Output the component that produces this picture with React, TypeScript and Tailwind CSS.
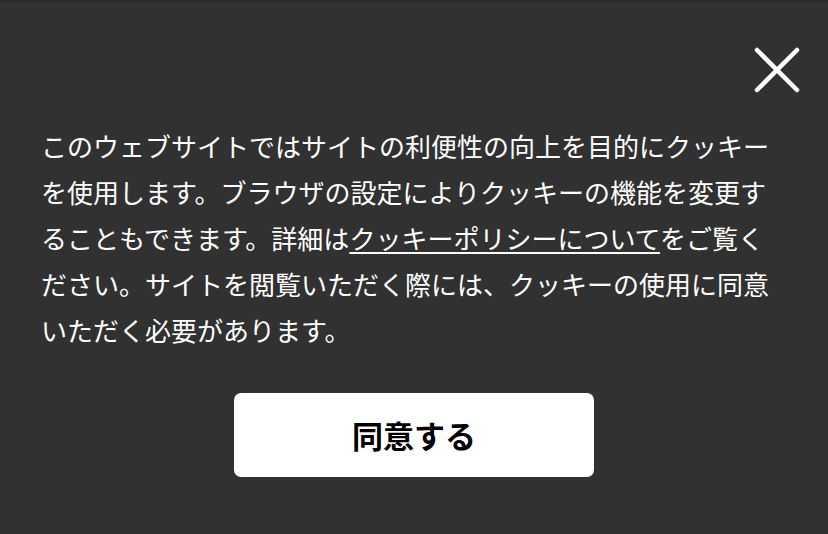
export default function App() {
  return (
    <div
      className="w-[828px] h-[534px] bg-[#313131] text-white overflow-hidden"
      style={{ fontFamily: '"Noto Sans CJK JP", "Noto Sans", sans-serif' }}
    >
      <div className="h-[2px] bg-[#2a2a2a]" />
      <div className="flex justify-end pt-[45px] pr-[28px]">
        <button className="w-[46px] h-[46px]" aria-label="閉じる">
          <svg viewBox="0 0 46 46" width="46" height="46">
            <path
              d="M3 3 L43 43 M43 3 L3 43"
              stroke="#ffffff"
              strokeWidth="4.5"
              strokeLinecap="round"
              fill="none"
            />
          </svg>
        </button>
      </div>
      <div className="pl-[41px] pr-[45px] pt-[30px]">
        <p className="text-[26px] leading-[46px] tracking-normal">
          このウェブサイトではサイトの利便性の向上を目的にクッキーを使用します。ブラウザの設定によりクッキーの機能を変更することもできます。詳細は
          <a className="underline underline-offset-[3px] decoration-[2px]" href="#">
            クッキーポリシーについて
          </a>
          をご覧ください。サイトを閲覧いただく際には、クッキーの使用に同意いただく必要があります。
        </p>
      </div>
      <div className="flex justify-center pt-[40px]">
        <button className="w-[360px] h-[84px] bg-white rounded-[7px] text-black text-[31px] font-bold">
          同意する
        </button>
      </div>
    </div>
  )
}
